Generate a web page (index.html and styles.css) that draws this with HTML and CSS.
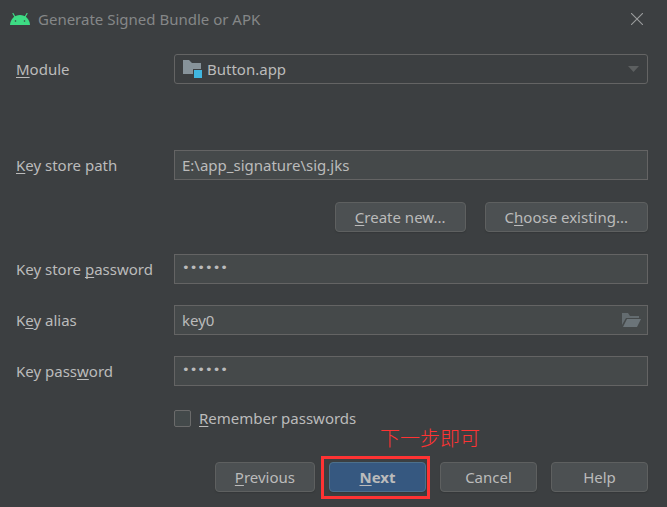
FILE: index.html
```
<!DOCTYPE html>
<html lang="en">
<head>
<meta charset="utf-8">
<title>Generate Signed Bundle or APK</title>
<link rel="stylesheet" href="styles.css">
</head>
<body>
<main class="dialog">
  <header class="titlebar">
    <svg class="android" viewBox="0 0 20 12" aria-hidden="true">
      <path d="M3 .5 5 4M17 .5 15 4" stroke="#3ddc84" stroke-width="1.200" stroke-linecap="round"/>
      <path d="M0 12C.3 6 4.700 2 10 2S19.700 6 20 12z" fill="#3ddc84"/>
      <circle cx="5.500" cy="8" r=".8" fill="#3c3f41"/><circle cx="14.500" cy="8" r=".8" fill="#3c3f41"/>
    </svg>
    <h1 class="title">Generate Signed Bundle or APK</h1>
    <button class="close" type="button" aria-label="Close">
      <svg viewBox="0 0 12 12" aria-hidden="true"><path d="M0 0 12 12M12 0 0 12" stroke="#9a9c9d" stroke-width="1.100"/></svg>
    </button>
  </header>
  <form class="form">
    <div class="group">
      <div class="row row-module">
        <label for="module"><u>M</u>odule</label>
        <div class="control">
          <svg class="folder" viewBox="0 0 20 18" aria-hidden="true">
            <path d="M1 0H7L10 3H19V9H11V14H1z" fill="#87939a"/>
            <path d="M12 10H20V18H12z" fill="#40b6e0"/>
          </svg>
          <select id="module" class="field select"><option>Button.app</option></select>
          <svg class="arrow" viewBox="0 0 11 6" aria-hidden="true"><path d="M0 0H11L5.500 6z" fill="#5c5f60"/></svg>
        </div>
      </div>
      <div class="row">
        <label for="path"><u>K</u>ey store path</label>
        <input id="path" class="field" type="text" value="E:\app_signature\sig.jks">
      </div>
      <div class="actions">
        <button class="btn" type="button"><span><u>C</u>reate new...</span></button>
        <button class="btn" type="button"><span>C<u>h</u>oose existing...</span></button>
      </div>
    </div>
    <div class="group group-credentials">
      <div class="row">
        <label for="storepw">Key store <u>p</u>assword</label>
        <input id="storepw" class="field secret" type="password" value="123456">
      </div>
      <div class="row">
        <label for="alias">K<u>e</u>y alias</label>
        <div class="control">
          <input id="alias" class="field" type="text" value="key0">
          <svg class="open" viewBox="0 0 19 15" aria-hidden="true">
            <path d="M0 0H6L8 3H17V5H4L0 12z" fill="#646c70"/>
            <path d="M5 6H19L15 14H1z" fill="#6b7479"/>
          </svg>
        </div>
      </div>
      <div class="row">
        <label for="keypw">Key pass<u>w</u>ord</label>
        <input id="keypw" class="field secret" type="password" value="123456">
      </div>
    </div>
    <div class="remember">
      <input id="remember" class="check" type="checkbox">
      <label for="remember"><u>R</u>emember passwords</label>
    </div>
  </form>
  <footer class="footer">
    <button class="btn" type="button"><span><u>P</u>revious</span></button>
    <div class="marked">
      <button class="btn primary" type="button"><span><u>N</u>ext</span></button>
      <span class="frame"></span>
      <span class="note" lang="zh-CN">下一步即可</span>
    </div>
    <button class="btn" type="button">Cancel</button>
    <button class="btn" type="button">Help</button>
  </footer>
</main>
</body>
</html>
```
FILE: styles.css
```
* { box-sizing: border-box; }
body {
  margin: 0;
  background: #3c3f41;
  color: #bbbbbb;
  font: 15px/20px "Noto Sans", "Noto Sans CJK SC", sans-serif;
}
button, input, select { font: inherit; color: inherit; margin: 0; }
svg { display: block; fill: none; }
u { text-decoration: underline 1px; text-underline-offset: 2px; text-decoration-skip-ink: none; }

.dialog { padding: 0 19px 15px 16px; }

.titlebar {
  display: flex;
  align-items: center;
  height: 38px;
  margin: 0 0 16px -6px;
}
.android { width: 20px; height: 12px; }
.title { flex: 1; margin: 0 0 0 8px; font-size: 15px; font-weight: 400; color: #858788; }
.close { padding: 5px; border: 0; background: none; }
.close svg { width: 12px; height: 12px; }

.form { display: flex; flex-direction: column; gap: 22px; }
.group { display: flex; flex-direction: column; gap: 22px; }
.group-credentials { gap: 21px; }
.row { display: grid; grid-template-columns: 158px 1fr; align-items: center; }
.row-module { margin-bottom: 44px; }
.control { position: relative; }
.field {
  display: block;
  width: 100%;
  height: 30px;
  padding: 0 7px 1px;
  border: 1px solid #646464;
  border-radius: 0;
  outline: 0;
  background: #45494a;
}
.secret { font: 13px/20px "DejaVu Sans", sans-serif; padding-bottom: 4px; }
.select {
  appearance: none;
  padding-left: 32px;
  border-radius: 3px;
  background: #3c3f41;
}
.folder { position: absolute; left: 8px; top: 6px; width: 20px; height: 18px; }
.arrow { position: absolute; right: 9px; top: 12px; width: 11px; height: 6px; }
.open { position: absolute; right: 7px; top: 8px; width: 19px; height: 15px; }

.btn {
  min-width: 97px;
  height: 30px;
  padding: 0 19px;
  border: 1px solid #5e6060;
  border-radius: 4px;
  background: #4c5052;
  box-shadow: 0 1px 1px #35383a;
}
.primary { border-color: #4c708c; background: #365880; font-weight: 700; }
.actions { display: flex; justify-content: flex-end; gap: 19px; }

.remember { display: flex; align-items: center; gap: 8px; padding-left: 158px; }
.check {
  appearance: none;
  width: 17px;
  height: 17px;
  border: 1px solid #6b6b6b;
  border-radius: 2px;
  background: #43494a;
}

.footer { display: flex; justify-content: flex-end; gap: 14px; margin-top: 34px; }
.marked { position: relative; }
.frame { position: absolute; inset: -6px -4px -7px -8px; border: 3px solid #ff3333; pointer-events: none; }
.note {
  position: absolute;
  left: 51px;
  bottom: 39px;
  font: 300 20px/30px "Noto Sans CJK SC", sans-serif;
  white-space: nowrap;
  color: #ff3333;
}
```
